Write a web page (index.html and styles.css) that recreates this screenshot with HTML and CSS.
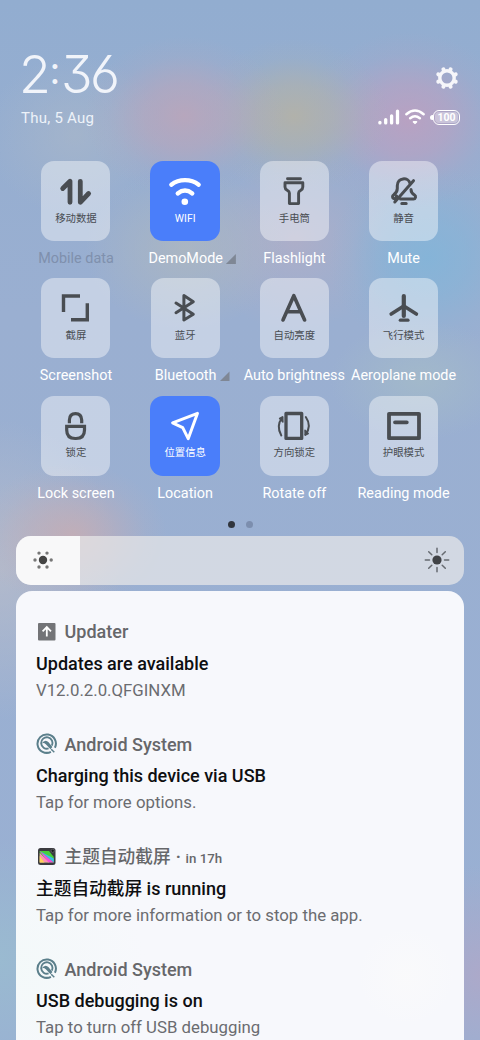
FILE: index.html
```html
<!DOCTYPE html>
<html lang="en">
<head>
<meta charset="utf-8">
<title>Control centre</title>
<link rel="stylesheet" href="styles.css">
</head>
<body>
<main class="screen">
  <header class="header">
    <div class="header-left">
      <div class="clock"><span class="d2">2</span><span class="colon">:</span><span class="d3">3</span><span class="d6">6</span></div>
      <div class="date">Thu, 5 Aug</div>
    </div>
    <div class="header-right">
      <svg class="gear" viewBox="0 0 24 24" width="24" height="24"><circle cx="12" cy="12" r="7.200" fill="none" stroke="#f6f6fa" stroke-width="3.400"/><path stroke="#f6f6fa" stroke-width="4" stroke-linecap="round" d="M8.700 4L8.400 3.300M15.300 4L15.600 3.300M20 8.700L20.700 8.400M20 15.300L20.700 15.600M15.300 20L15.600 20.700M8.700 20L8.400 20.700M4 15.300L3.300 15.600M4 8.700L3.300 8.400"/></svg>
      <div class="status">
        <svg viewBox="0 0 22 16" width="22" height="16" stroke="#fff" stroke-width="3.300" stroke-linecap="round"><path d="M1.900 13.300v.6M7.700 10.600v3.300M13.600 6.800v7.100M19.500 2.200v11.700"/></svg>
        <svg viewBox="0 0 20 16" width="20" height="16" fill="none" stroke="#fff" stroke-width="2.500" stroke-linecap="round"><path d="M1.400 5.200Q10-2.300 18.600 5.200M5.200 9.200Q10 5.300 14.800 9.200"/><path d="M8.600 12.800h2.800L10 14.200z" stroke-width="1.800" fill="#fff" stroke-linejoin="round"/></svg>
        <div class="battery"><span>100</span></div>
      </div>
    </div>
  </header>

  <section class="tiles">
    <div class="cell"><div class="tile"><svg class="icon" viewBox="0 0 40 36" stroke-width="4.800"><path d="M6.700 15.500L14 8.300V29.300M24.300 8.300V29.300L32.600 20.500"/></svg><span class="cap">移动数据</span></div><div class="label dim">Mobile data</div></div>
    <div class="cell"><div class="tile on"><svg class="icon" viewBox="0 0 40 36" stroke-width="4.300"><path d="M6.300 11.700C14 5.700 26 5.700 33.700 11.700M12.700 20.500Q20 14.600 27.300 20.500"/><circle cx="19.800" cy="28.700" r="3.300" fill="currentColor" stroke="none"/></svg><span class="cap">WIFI</span></div><div class="label more">DemoMode<i></i></div></div>
    <div class="cell"><div class="tile"><svg class="icon" viewBox="0 0 40 36" stroke-width="2.900"><path d="M13.500 5.700H26.500M11 9.800H28.800V14Q28.800 16 26.800 17.200Q24.600 18.500 24.600 20V30.600H15.400V20Q15.400 18.500 13.200 17.200Q11 16 11 14z"/></svg><span class="cap">手电筒</span></div><div class="label">Flashlight</div></div>
    <div class="cell"><div class="tile"><svg class="icon" viewBox="0 0 40 36" stroke-width="3"><path d="M12.600 23C12.400 25.200 10.500 26 9.500 25.500C8.200 24.800 8.200 22.800 9.500 22C12.300 20 13.300 18.800 13.300 15.500V12.700C13.300 4.300 24.500 3.700 26 10.500M27 16.500C27 19 28 20.500 30.500 22C32.300 23.300 31.700 26 29.500 26H16.500M29.500 7.700L10.800 29M17.800 30.400H22.200"/></svg><span class="cap">静音</span></div><div class="label">Mute</div></div>

    <div class="cell"><div class="tile"><svg class="icon sharp" viewBox="0 0 40 36" stroke-width="3.400"><path d="M24 6H7.500V22M31.300 13.300V29.700H15"/></svg><span class="cap">截屏</span></div><div class="label">Screenshot</div></div>
    <div class="cell"><div class="tile"><svg class="icon" viewBox="0 0 40 36" stroke-width="3"><path d="M11 13L28.300 24.300L18.900 30V5.500L28.300 11.700L11 22.700"/></svg><span class="cap">蓝牙</span></div><div class="label more">Bluetooth<i></i></div></div>
    <div class="cell"><div class="tile"><svg class="icon" viewBox="0 0 40 36" stroke-width="3.600"><path d="M9 30L19.800 5.700L30.600 30M13.500 21.700H26.500"/></svg><span class="cap">自动亮度</span></div><div class="label">Auto brightness</div></div>
    <div class="cell"><div class="tile"><svg class="icon" viewBox="0 0 40 36" stroke-width="4.200"><path d="M19.800 6V26"/><path stroke-width="3.600" d="M7.200 24L19.800 16L32.400 24"/><path stroke-width="3.200" d="M16.300 30.200H24"/></svg><span class="cap">飞行模式</span></div><div class="label">Aeroplane mode</div></div>

    <div class="cell"><div class="tile"><svg class="icon sharp" viewBox="0 0 40 36" stroke-width="3.200"><path d="M13.400 15.300V12Q13.600 5.700 19.500 5.700Q25.400 5.700 25.700 12V15.300M10.700 18.400H28.500V22Q28.500 30.500 20 30.500H19.200Q10.700 30.500 10.700 22z"/></svg><span class="cap">锁定</span></div><div class="label">Lock screen</div></div>
    <div class="cell"><div class="tile on"><svg class="icon" viewBox="0 0 40 36" stroke-width="3"><path d="M32.500 5.300L7.600 14.800L17.700 19.700L23.200 30.700z"/></svg><span class="cap">位置信息</span></div><div class="label">Location</div></div>
    <div class="cell"><div class="tile"><svg class="icon" viewBox="0 0 40 36" stroke-width="3.300"><path d="M12 5.500H27.700V30.400H12z"/><path stroke-width="2" d="M8.200 9.500Q1.800 18 7.300 27.500M31.800 9Q38 18 31.500 26.500"/><path stroke-width="1.500" fill="currentColor" d="M5.600 10.500L8.700 8.800L8.900 14zM34.200 25.500L31.200 27.200L31 22.300z"/></svg><span class="cap">方向锁定</span></div><div class="label">Rotate off</div></div>
    <div class="cell"><div class="tile"><svg class="icon" viewBox="0 0 40 36" stroke-width="3.800"><path d="M5 5.800H35V30.200H5zM11 14.300H22.800"/></svg><span class="cap">护眼模式</span></div><div class="label">Reading mode</div></div>
  </section>

  <div class="dots"><i class="current"></i><i></i></div>

  <div class="slider">
    <div class="fill"><svg viewBox="0 0 24 24" width="24" height="24"><circle cx="12" cy="12" r="4.200" fill="#444"/><g fill="#777"><circle cx="4" cy="12" r="1.700"/><circle cx="20.200" cy="12" r="1.700"/><circle cx="8" cy="5.100" r="1.700"/><circle cx="16" cy="5.100" r="1.700"/><circle cx="8" cy="19" r="1.700"/><circle cx="16" cy="19" r="1.700"/></g></svg></div>
    <svg viewBox="0 0 26 26" width="26" height="26"><circle cx="13" cy="13" r="4.600" fill="#404246"/><path stroke="#666a70" stroke-width="1.500" stroke-linecap="round" d="M13 1.300V5.500M13 20.500V24.700M1.300 13H5.500M20.500 13H24.700M4.700 4.700L7.800 7.800M18.200 18.200L21.300 21.300M4.700 21.300L7.800 18.200M18.200 7.800L21.300 4.700"/></svg>
  </div>

  <section class="card">
    <article class="note">
      <div class="app"><svg viewBox="0 0 22 22" width="22" height="22"><rect x="2" y="2" width="17.500" height="17.500" rx="1" fill="#737477"/><path d="M10.800 15.500V6.500M6.600 10.300L10.800 6.100L15 10.300" fill="none" stroke="#fff" stroke-width="1.800"/></svg><span>Updater</span></div>
      <h2>Updates are available</h2>
      <p class="v">V12.0.2.0.QFGINXM</p>
    </article>
    <article class="note">
      <div class="app"><svg viewBox="0 0 22 22" width="22" height="22"><g fill="none" stroke="#5b7f8b"><path stroke-width="2" d="M14.900 18.800A9.200 9.200 0 1 1 18.900 14.800"/><path stroke-width="1.900" d="M12.600 15.400A5.700 5.700 0 1 1 15.900 12.600"/><path stroke-width="1.500" d="M15.200 16.200L18.300 19.300"/></g><path fill="#5b7f8b" d="M5.600 10.500Q9.300 5.500 12.600 9.300L16.400 14L14.500 16.200L9.800 11.200Q7.700 9.300 5.600 10.500z"/></svg><span>Android System</span></div>
      <h2>Charging this device via USB</h2>
      <p>Tap for more options.</p>
    </article>
    <article class="note">
      <div class="app"><svg viewBox="0 0 22 22" width="22" height="22"><rect x="2" y="2" width="17.500" height="17" rx="2.500" fill="#3b3b40"/><path d="M3.700 5H13L17.800 11V16.500H3.700z" fill="#48cf38"/><path d="M3.700 5L17.800 12.500V16.500z" fill="#39bce9"/><path d="M3.700 5L17.800 16.500H12z" fill="#f64bdc"/><path d="M3.700 7L13 16.500H3.700z" fill="#ff8fb0"/><path d="M3.700 10L8.500 16.500H3.700z" fill="#ffd25b"/><circle cx="16.700" cy="4.800" r="1.600" fill="#18191d" stroke="#777" stroke-width=".6"/></svg><span class="cjk">主题自动截屏</span><span class="when"><b>·</b> in 17h</span></div>
      <h2><span class="cjk">主题自动截屏</span> is running</h2>
      <p>Tap for more information or to stop the app.</p>
    </article>
    <article class="note">
      <div class="app"><svg viewBox="0 0 22 22" width="22" height="22"><g fill="none" stroke="#5b7f8b"><path stroke-width="2" d="M14.900 18.800A9.200 9.200 0 1 1 18.900 14.800"/><path stroke-width="1.900" d="M12.600 15.400A5.700 5.700 0 1 1 15.900 12.600"/><path stroke-width="1.500" d="M15.200 16.200L18.300 19.300"/></g><path fill="#5b7f8b" d="M5.600 10.500Q9.300 5.500 12.600 9.300L16.400 14L14.500 16.200L9.800 11.200Q7.700 9.300 5.600 10.500z"/></svg><span>Android System</span></div>
      <h2>USB debugging is on</h2>
      <p>Tap to turn off USB debugging</p>
    </article>
  </section>
</main>
</body>
</html>
```
FILE: styles.css
```css
* { box-sizing: border-box; margin: 0; padding: 0; }
body { font-family: Roboto, "Noto Sans CJK SC", sans-serif; }
svg { display: block; flex: none; }

.screen {
  width: 480px;
  height: 1040px;
  overflow: hidden;
  padding-top: 48px;
  background:
    radial-gradient(ellipse 100px 80px at 184px 116px, rgba(194,164,182,.75), rgba(194,164,182,.5) 40%, rgba(194,164,182,.12) 75%, transparent),
    radial-gradient(ellipse 95px 78px at 294px 116px, rgba(182,178,164,.85), rgba(182,178,164,.55) 40%, rgba(182,178,164,.12) 75%, transparent),
    radial-gradient(ellipse 105px 88px at 408px 120px, rgba(194,158,190,.78), rgba(194,158,190,.52) 40%, rgba(194,158,190,.12) 75%, transparent),
    radial-gradient(ellipse 100px 95px at 428px 258px, rgba(130,181,217,.85), rgba(130,181,217,.55) 40%, rgba(130,181,217,.12) 78%, transparent),
    radial-gradient(ellipse 90px 80px at 75px 135px, rgba(172,184,200,.6), transparent),
    radial-gradient(ellipse 100px 80px at 185px 250px, rgba(176,184,190,.75), rgba(176,184,190,.4) 45%, transparent),
    radial-gradient(ellipse 100px 90px at 295px 240px, rgba(180,174,198,.75), rgba(180,174,198,.4) 45%, transparent),
    radial-gradient(ellipse 90px 60px at 420px 380px, rgba(165,188,200,.75), transparent),
    radial-gradient(ellipse 95px 72px at 72px 535px, rgba(198,173,180,.85), rgba(198,173,180,.5) 40%, rgba(198,173,180,.12) 78%, transparent),
    radial-gradient(ellipse 120px 150px at 0 570px, rgba(184,188,202,.8), transparent),
    radial-gradient(ellipse 110px 120px at 0 960px, rgba(154,188,208,.85), transparent),
    radial-gradient(ellipse 90px 110px at 480px 975px, rgba(175,168,200,.85), transparent),
    linear-gradient(#92add0, #9aafd1 30%, #99b0d3);
}

.header { display: flex; justify-content: space-between; height: 113px; padding: 0 20px 0 21px; }
.clock {
  display: flex;
  height: 52px;
  line-height: 54px;
  color: #f1f4fa;
  font-family: Inter, sans-serif;
  font-weight: 300;
  font-size: 52px;
  font-feature-settings: "cv09", "cv03";
}
.d2 { width: 31px; margin-left: -2px; }
.colon { width: 11px; font-family: Lato, sans-serif; font-size: 39px; font-weight: 400; line-height: 43px; }
.d3 { width: 29px; }
.date { margin-top: 9px; color: #edf2f9; font-size: 15px; line-height: 18px; letter-spacing: .25px; }
.header-right { display: flex; flex-direction: column; align-items: flex-end; padding-top: 18px; }
.gear { margin-right: 1px; }
.status { display: flex; align-items: center; gap: 5px; margin-top: 19px; }
.battery {
  position: relative;
  width: 27px;
  height: 15px;
  margin-left: 3px;
  border: 1.500px solid #fff;
  border-radius: 6px;
  padding: 1px;
  color: #fff;
  font-size: 10.500px;
  font-weight: 700;
  line-height: 11px;
  text-align: center;
}
.battery span { display: block; border-radius: 4px; background: rgba(255,255,255,.35); }
.battery::before {
  content: "";
  position: absolute;
  left: -4px;
  top: 4px;
  width: 3px;
  height: 5px;
  border-radius: 3px 0 0 3px;
  background: #fff;
}

.tiles {
  display: grid;
  grid-template-columns: repeat(4, 109.200px);
  grid-auto-rows: 117.400px;
  padding-left: 21.400px;
}
.cell { display: flex; flex-direction: column; align-items: center; }
.tile {
  display: flex;
  flex-direction: column;
  align-items: center;
  width: 69px;
  height: 80px;
  padding-top: 12px;
  border-radius: 13px;
  background: rgba(255,255,255,.42);
  color: #494d52;
}
.tile.on { width: 70px; background: #4a7efa; color: #fff; }
.icon { width: 40px; height: 36px; fill: none; stroke: currentColor; stroke-linecap: round; stroke-linejoin: round; }
.icon.sharp { stroke-linecap: butt; stroke-linejoin: miter; }
.cap { margin-top: 1.500px; font-size: 10.400px; line-height: 16px; white-space: nowrap; }
.label { margin-top: 9px; color: #fff; font-size: 14.400px; line-height: 18px; white-space: nowrap; }
.label.dim { color: #7f90ad; }
.label.more { display: flex; align-items: center; gap: 3px; margin-left: 14px; }
.label.more i { width: 10px; height: 10px; background: #7f8795; clip-path: polygon(100% 0, 100% 100%, 0 100%); }

.dots { display: flex; justify-content: center; gap: 11px; height: 22.800px; padding-top: 7.500px; }
.dots i { width: 7px; height: 7px; border-radius: 50%; background: #7c8eae; }
.dots .current { background: #30353d; }

.slider {
  display: flex;
  align-items: center;
  justify-content: space-between;
  width: 448px;
  height: 49px;
  margin: 0 16px;
  padding-right: 14px;
  border-radius: 15px;
  overflow: hidden;
  background: rgba(234,234,234,.7);
}
.fill { display: flex; align-items: center; width: 64px; height: 49px; padding-left: 15px; background: #f8f8f9; }

.card {
  width: 448px;
  height: 470px;
  margin: 6px 16px 0;
  padding: 30px 20px 0;
  border-radius: 16px;
  background:
    radial-gradient(circle at 390px 385px, rgba(250,250,251,.8), transparent 50px),
    radial-gradient(circle at 0 380px, rgba(243,249,249,.9), transparent 130px),
    #f7f8fc;
}
.note { height: 112.500px; }
.app { display: flex; align-items: center; height: 22px; color: #66676a; font-size: 18px; font-weight: 500; }
.app svg { margin-right: 7px; margin-left: -.5px; }
.when { margin-left: 5px; font-size: 13.300px; white-space: pre; }
.when b { margin-right: 1.500px; font-size: 17px; }
h2 { height: 22px; margin-top: 10px; color: #0e0f11; font-size: 18px; font-weight: 500; line-height: 22px; white-space: nowrap; }
p { margin-top: 5px; color: #6b6c70; font-size: 16.800px; line-height: 20px; white-space: nowrap; }
.cjk { font-family: "Noto Sans CJK SC", sans-serif; font-size: 17.700px; line-height: 1; }
.app .cjk { margin-top: -2px; }
```
